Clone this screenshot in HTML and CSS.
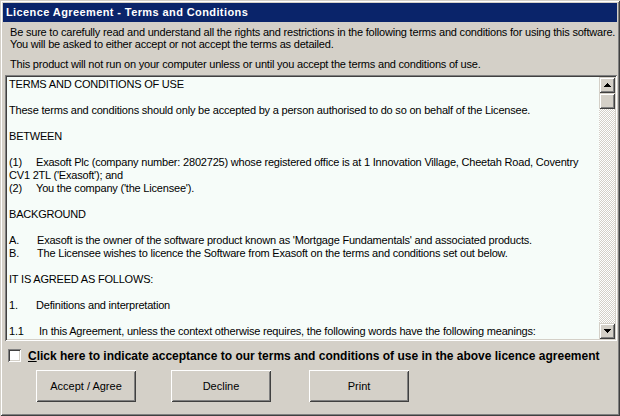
FILE: index.html
```html
<!DOCTYPE html>
<html lang="en">
<head>
    <meta charset="UTF-8">
    <title>Licence Agreement - Terms and Conditions</title>
    <link rel="stylesheet" href="styles.css">
</head>
<body>
    <div class="window">
        <div class="titlebar">Licence Agreement - Terms and Conditions</div>

        <div class="intro">
            <p>Be sure to carefully read and understand all the rights and restrictions in the following terms and conditions for using this software.<br>You will be asked to either accept or not accept the terms as detailed.</p>
            <p>This product will not run on your computer unless or until you accept the terms and conditions of use.</p>
        </div>

        <div class="terms">
            <div class="terms-text">
                <p>TERMS AND CONDITIONS OF USE</p>
                <p>These terms and conditions should only be accepted by a person authorised to do so on behalf of the Licensee.</p>
                <p>BETWEEN</p>
                <p><span class="tab">(1)</span>Exasoft Plc (company number: 2802725) whose registered office is at 1 Innovation Village, Cheetah Road, Coventry<br>CV1 2TL ('Exasoft'); and<br><span class="tab">(2)</span>You the company ('the Licensee').</p>
                <p>BACKGROUND</p>
                <p><span class="tab wide">A.</span>Exasoft is the owner of the software product known as 'Mortgage Fundamentals' and associated products.<br><span class="tab wide">B.</span>The Licensee wishes to licence the Software from Exasoft on the terms and conditions set out below.</p>
                <p>IT IS AGREED AS FOLLOWS:</p>
                <p><span class="tab">1.</span>Definitions and interpretation</p>
                <p><span class="tab wider">1.1</span>In this Agreement, unless the context otherwise requires, the following words have the following meanings:</p>
            </div>
            <div class="scrollbar">
                <div class="sb-btn">
                    <svg width="7" height="4" viewBox="0 0 7 4"><path d="M3 0h1v1h1v1h1v1h1v1H0V3h1V2h1V1h1z" fill="#000"/></svg>
                </div>
                <div class="sb-thumb"></div>
                <div class="sb-track"></div>
                <div class="sb-btn">
                    <svg width="7" height="4" viewBox="0 0 7 4"><path d="M0 0h7v1H6v1H5v1H4v1H3V3H2V2H1V1H0z" fill="#000"/></svg>
                </div>
            </div>
        </div>

        <label class="accept">
            <span class="checkbox"></span>
            <span class="accept-text"><u>C</u>lick here to indicate acceptance to our terms and conditions of use in the above licence agreement</span>
        </label>

        <div class="buttons">
            <button type="button">Accept / Agree</button>
            <button type="button" class="decline">Decline</button>
            <button type="button">Print</button>
        </div>
    </div>
</body>
</html>
```

FILE: styles.css
```css
body {
    margin: 0;
    font-family: "Liberation Sans", Arial, sans-serif;
    font-size: 11px;
    color: #000;
    background-color: #d4d0c8;
}

.window {
    box-sizing: border-box;
    width: 620px;
    height: 416px;
    padding: 3px;
    background-color: #d4d0c8;
    box-shadow: inset 1px 1px #d4d0c8, inset -1px -1px #404040,
                inset 2px 2px #ffffff, inset -2px -2px #808080;
}

.titlebar {
    height: 19px;
    line-height: 19px;
    padding-left: 3px;
    background-color: #0a246a;
    color: #ffffff;
    font-weight: bold;
    font-size: 11px;
    letter-spacing: 0.4px;
}

.intro {
    margin: 4px 0 0 7px;
    letter-spacing: -0.2px;
}

.intro p {
    margin: 0 0 8px;
    line-height: 12px;
    white-space: nowrap;
}

.terms {
    display: flex;
    width: 612px;
    height: 266px;
    box-sizing: border-box;
    margin: -3px 0 0 2px;
    box-shadow: inset 1px 1px #808080, inset -1px -1px #ffffff,
                inset 2px 2px #404040, inset -2px -2px #d4d0c8;
    padding: 2px;
    background-color: #f6fcf9;
}

.terms-text {
    flex: 1;
    overflow: hidden;
    padding: 1px 0 0 2px;
    line-height: 13px;
    letter-spacing: -0.2px;
    white-space: nowrap;
}

.terms-text p {
    margin: 0 0 13px;
}

.tab {
    display: inline-block;
    width: 27px;
}

.tab.wide {
    width: 28px;
}

.tab.wider {
    width: 30px;
}

.scrollbar {
    display: flex;
    flex-direction: column;
    width: 16px;
}

.sb-btn,
.sb-thumb {
    display: flex;
    align-items: center;
    justify-content: center;
    height: 16px;
    background-color: #d4d0c8;
    box-sizing: border-box;
    box-shadow: inset 1px 1px #d4d0c8, inset -1px -1px #404040,
                inset 2px 2px #ffffff, inset -2px -2px #808080;
}

.sb-track {
    flex: 1;
    background-color: #ffffff;
    background-image: repeating-conic-gradient(#d4d0c8 0 25%, #ffffff 0 50%);
    background-size: 2px 2px;
}

.accept {
    display: flex;
    align-items: center;
    height: 15px;
    margin: 7px 0 0 5px;
    font-weight: bold;
    font-size: 12px;
}

.checkbox {
    width: 13px;
    height: 13px;
    box-sizing: border-box;
    background-color: #ffffff;
    box-shadow: inset 1px 1px #808080, inset -1px -1px #ffffff,
                inset 2px 2px #404040, inset -2px -2px #d4d0c8;
    margin-right: 7px;
}

.buttons {
    display: flex;
    gap: 35px;
    margin: 7px 0 0 33px;
}

.buttons button {
    width: 100px;
    height: 32px;
    border: none;
    padding: 0;
    background-color: #d4d0c8;
    font-family: "Liberation Sans", Arial, sans-serif;
    font-size: 11px;
    color: #000;
    box-shadow: inset 1px 1px #ffffff, inset -1px -1px #404040,
                inset 2px 2px #d4d0c8, inset -2px -2px #808080;
}

.buttons .decline {
    margin-right: 3px;
}
```
